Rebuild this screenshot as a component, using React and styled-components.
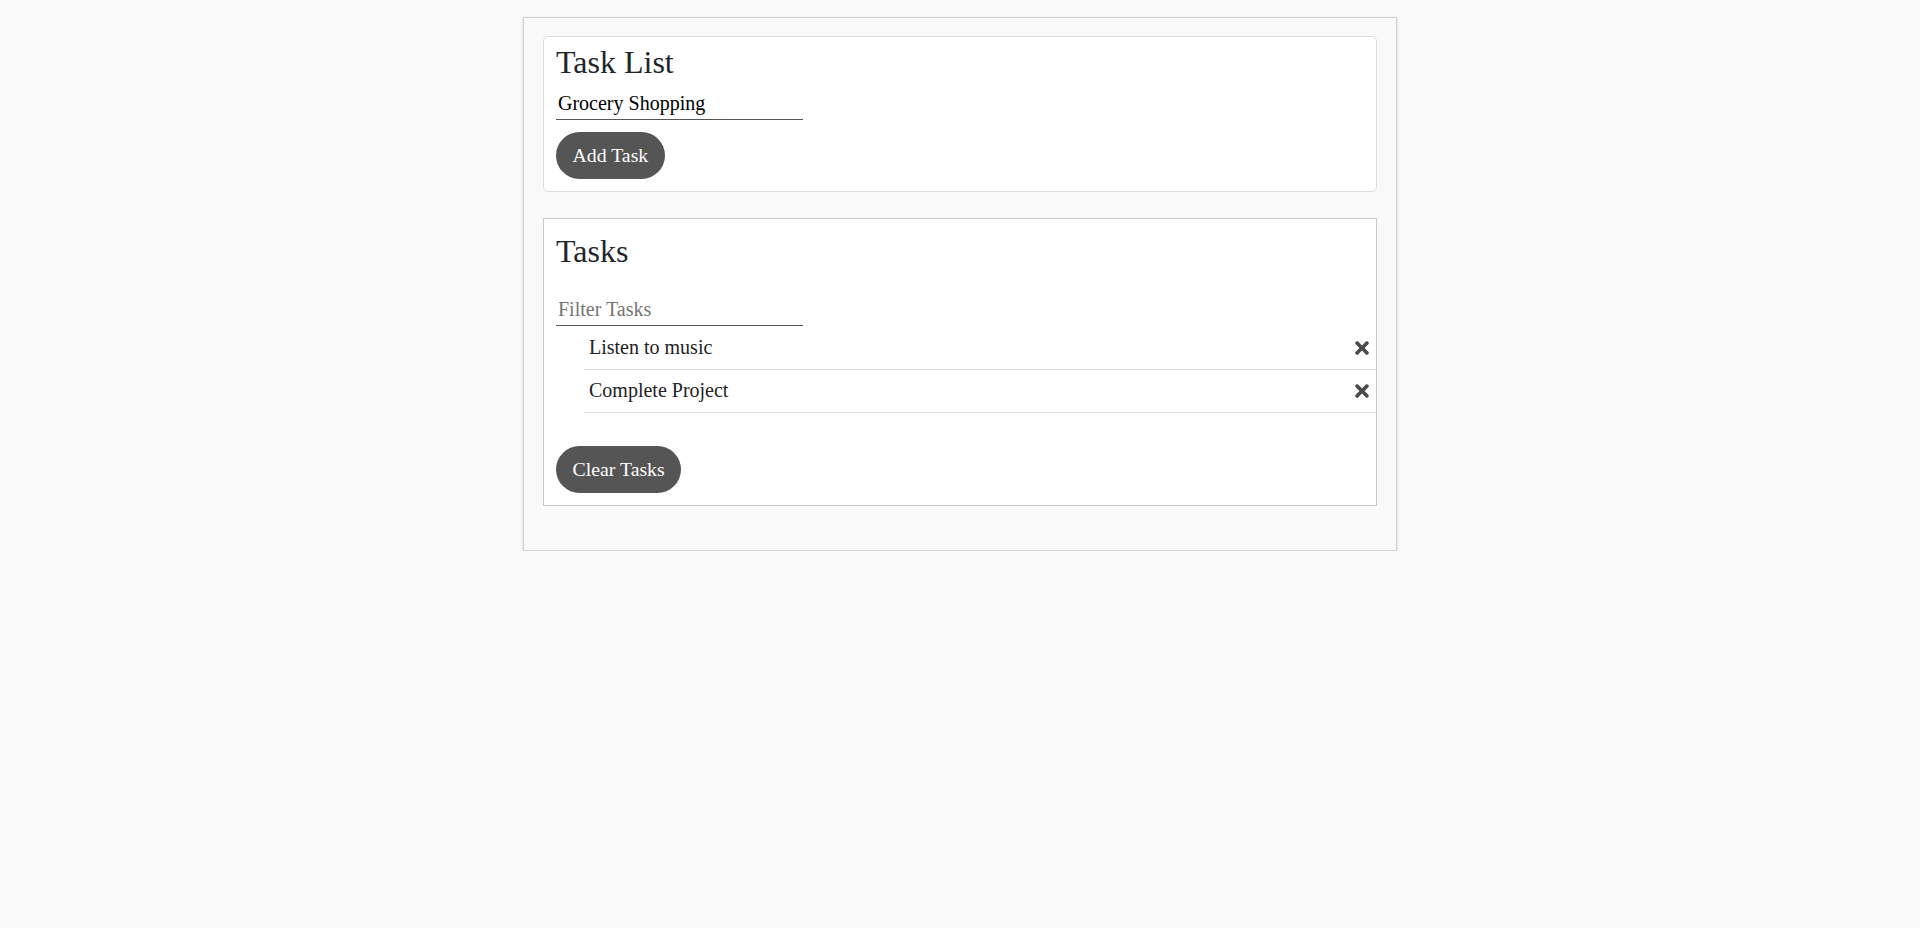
import React, { useState } from "react";
import styled, { createGlobalStyle } from "styled-components";
import { FaTimes } from "react-icons/fa";

const GlobalStyle = createGlobalStyle`
  html, body {
    margin: 0;
    padding: 0;
    background: #fafafa;
    font-family: "Liberation Serif", "Times New Roman", serif;
    color: #222;
  }
  * { box-sizing: border-box; }
`;

const Container = styled.div`
  width: 874px;
  margin: 17px auto 0;
  padding: 18px 19px 44px;
  background: #f9f9f9;
  border: 1px solid #d9cfd9;
  box-shadow: 0 1px 3px rgba(0, 0, 0, 0.16);
  display: flex;
  flex-direction: column;
  gap: 26px;
`;

const Card = styled.section`
  background: #fff;
  border: 1px solid ${(p) => (p.$rounded ? "#e0dde0" : "#cdc5cd")};
  border-radius: ${(p) => (p.$rounded ? "5px" : "0")};
  padding: ${(p) => p.$pad};
  display: flex;
  flex-direction: column;
  align-items: flex-start;
`;

const Title = styled.h2`
  margin: 0 0 0 12px;
  font-size: 32px;
  line-height: 36px;
  font-weight: normal;
  color: #1f262b;
`;

const TextInput = styled.input`
  width: 247px;
  height: 29px;
  margin: ${(p) => p.$margin};
  padding: 0 2px 4px;
  border: none;
  border-bottom: 1px solid #555;
  background: transparent;
  font-family: "Liberation Serif", "Times New Roman", serif;
  font-size: 20px;
  color: #000;
  outline: none;
  &::placeholder {
    color: #757575;
  }
`;

const PillButton = styled.button`
  height: 47px;
  margin: ${(p) => p.$margin};
  padding: 0 16.5px;
  border: none;
  border-radius: 24px;
  background: #555;
  color: #fff;
  font-family: "Liberation Serif", "Times New Roman", serif;
  font-size: 19.8px;
  cursor: pointer;
`;

const TaskListUl = styled.ul`
  list-style: none;
  align-self: stretch;
  margin: 1px 0 0 40px;
  padding: 0;
`;

const TaskItem = styled.li`
  display: flex;
  align-items: center;
  justify-content: space-between;
  padding: 9px 4px 10px 5px;
  border-bottom: 1px solid #e0e0e0;
  font-size: 20px;
  line-height: 23px;
  color: #222;
`;

const DeleteLink = styled.a`
  display: flex;
  align-items: center;
  color: #4a4a4a;
  cursor: pointer;
  margin-top: 1px;
`;

export default function App() {
  const [task, setTask] = useState("Grocery Shopping");
  const [filter, setFilter] = useState("");
  const [tasks, setTasks] = useState(["Listen to music", "Complete Project"]);

  const addTask = () => {
    if (task.trim()) setTasks([...tasks, task.trim()]);
  };

  const shown = tasks.filter((t) =>
    t.toLowerCase().includes(filter.toLowerCase())
  );

  return (
    <>
      <GlobalStyle />
      <Container>
        <Card $rounded $pad="7px 0 12px">
          <Title>Task List</Title>
          <TextInput
            $margin="11px 0 0 12px"
            value={task}
            onChange={(e) => setTask(e.target.value)}
          />
          <PillButton $margin="12px 0 0 12px" onClick={addTask}>
            Add Task
          </PillButton>
        </Card>
        <Card $pad="14px 0 12px">
          <Title>Tasks</Title>
          <TextInput
            $margin="28px 0 0 12px"
            placeholder="Filter Tasks"
            value={filter}
            onChange={(e) => setFilter(e.target.value)}
          />
          <TaskListUl>
            {shown.map((t, i) => (
              <TaskItem key={t + i}>
                <span>{t}</span>
                <DeleteLink
                  onClick={() => setTasks(tasks.filter((x) => x !== t))}
                >
                  <FaTimes size={20} />
                </DeleteLink>
              </TaskItem>
            ))}
          </TaskListUl>
          <PillButton $margin="33px 0 0 12px" onClick={() => setTasks([])}>
            Clear Tasks
          </PillButton>
        </Card>
      </Container>
    </>
  );
}
